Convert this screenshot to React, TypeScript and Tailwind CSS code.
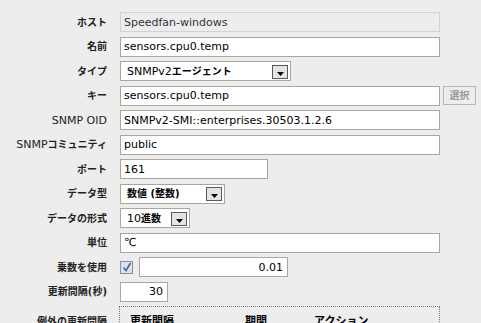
import React from 'react';

const font = { fontFamily: '"DejaVu Sans", "Noto Sans CJK JP", sans-serif' };

function J({ children }: { children: React.ReactNode }) {
  return <span className="text-[10px] font-bold">{children}</span>;
}

function Label({ children }: { children: React.ReactNode }) {
  return (
    <div className="w-[107px] shrink-0 text-right text-[11px] text-[#222] leading-none">{children}</div>
  );
}

function Input({ value, w, right, disabled }: { value: string; w: string; right?: boolean; disabled?: boolean }) {
  return (
    <div
      className={`${w} h-[20px] flex items-center text-[11px] leading-none border ${
        disabled ? 'border-[#d2d2d2] bg-[#ededed] text-[#333]' : 'border-[#aaa79a] bg-white text-black'
      } ${right ? 'justify-end pr-[4px]' : 'pl-[3px]'}`}
    >
      {value}
    </div>
  );
}

function Select({ w, children }: { w: string; children: React.ReactNode }) {
  return (
    <div className={`${w} h-[20px] flex items-center justify-between border border-[#aaa79a] bg-white pl-[6px] pr-[2px] text-[11px] leading-none text-black`}>
      <div>{children}</div>
      <div className="w-[16px] h-[14px] mt-[1px] border border-[#5a5a5a] bg-[#e4e4e4] flex items-end justify-center pb-[2px]">
        <svg width="7" height="4" viewBox="0 0 7 4">
          <path d="M0 0h7L3.5 4z" fill="#000" />
        </svg>
      </div>
    </div>
  );
}

function Row({ label, children }: { label: React.ReactNode; children: React.ReactNode }) {
  return (
    <div className="flex items-center gap-[13px] h-[20px]">
      <Label>{label}</Label>
      {children}
    </div>
  );
}

export default function App() {
  return (
    <div className="h-[323px] w-[481px] overflow-hidden bg-[#ededed] pt-[12px]" style={font}>
      <div className="flex flex-col gap-[4.5px]">
        <Row label={<J>ホスト</J>}>
          <Input value="Speedfan-windows" w="w-[320px]" disabled />
        </Row>
        <Row label={<J>名前</J>}>
          <Input value="sensors.cpu0.temp" w="w-[320px]" />
        </Row>
        <Row label={<J>タイプ</J>}>
          <Select w="w-[171px]">
            SNMPv2<J>エージェント</J>
          </Select>
        </Row>
        <Row label={<J>キー</J>}>
          <Input value="sensors.cpu0.temp" w="w-[320px]" />
          <div className="-ml-[10px] w-[33px] h-[19px] flex items-center justify-center border border-[#b9b6a6] text-[#9a9a9a]">
            <J>選択</J>
          </div>
        </Row>
        <Row label="SNMP OID">
          <Input value="SNMPv2-SMI::enterprises.30503.1.2.6" w="w-[320px]" />
        </Row>
        <Row label={<>SNMP<J>コミュニティ</J></>}>
          <Input value="public" w="w-[320px]" />
        </Row>
        <Row label={<J>ポート</J>}>
          <Input value="161" w="w-[148px]" />
        </Row>
        <Row label={<J>データ型</J>}>
          <Select w="w-[105px]">
            <J>数値 (整数)</J>
          </Select>
        </Row>
        <Row label={<J>データの形式</J>}>
          <Select w="w-[70px]">
            10<J>進数</J>
          </Select>
        </Row>
        <Row label={<J>単位</J>}>
          <Input value="℃" w="w-[320px]" />
        </Row>
        <Row label={<J>乗数を使用</J>}>
          <div className="flex items-center gap-[6px]">
            <div className="w-[13px] h-[13px] border border-[#8e8e9a] bg-[#dde1ea] flex items-center justify-center">
              <svg width="10" height="10" viewBox="0 0 10 10">
                <path d="M1.5 5.5L4 8.5L8.5 1" stroke="#4e64a6" strokeWidth="1.6" fill="none" />
              </svg>
            </div>
            <Input value="0.01" w="w-[149px]" right />
          </div>
        </Row>
        <Row label={<J>更新間隔(秒)</J>}>
          <Input value="30" w="w-[48px]" right />
        </Row>
        <div className="flex items-start gap-[12px]">
          <div className="w-[107px] shrink-0 text-right text-[#222] leading-none pt-[6px]">
            <J>例外の更新間隔</J>
          </div>
          <div className="w-[321px] h-[60px] border border-dotted border-[#777] pt-[9px] pl-[10px] flex text-black leading-none">
            <div className="w-[115px] text-[11px] font-bold">更新間隔</div>
            <div className="w-[69px] text-[11px] font-bold">期間</div>
            <div className="text-[11px] font-bold">アクション</div>
          </div>
        </div>
      </div>
    </div>
  );
}
